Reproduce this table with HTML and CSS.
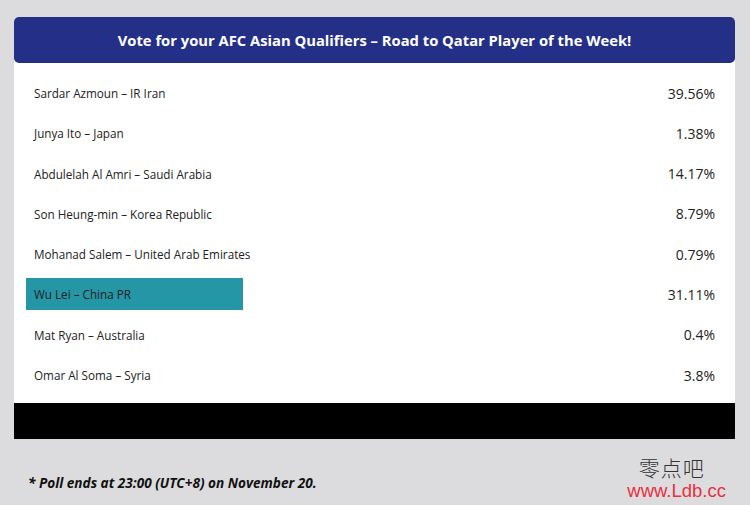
FILE: index.html
```html
<!DOCTYPE html>
<html>
<head>
<meta charset="utf-8">
<link rel="stylesheet" href="styles.css">
</head>
<body>
<div class="page">
  <div class="card">
    <div class="header">Vote for your AFC Asian Qualifiers – Road to Qatar Player of the Week!</div>
    <div class="results">
      <div class="row"><span class="name">Sardar Azmoun – IR Iran</span><span class="pct">39.56%</span></div>
      <div class="row"><span class="name">Junya Ito – Japan</span><span class="pct">1.38%</span></div>
      <div class="row"><span class="name">Abdulelah Al Amri – Saudi Arabia</span><span class="pct">14.17%</span></div>
      <div class="row"><span class="name">Son Heung-min – Korea Republic</span><span class="pct">8.79%</span></div>
      <div class="row"><span class="name">Mohanad Salem – United Arab Emirates</span><span class="pct">0.79%</span></div>
      <div class="row"><div class="bar" style="width:31.11%"></div><span class="name">Wu Lei – China PR</span><span class="pct">31.11%</span></div>
      <div class="row"><span class="name">Mat Ryan – Australia</span><span class="pct">0.4%</span></div>
      <div class="row"><span class="name">Omar Al Soma – Syria</span><span class="pct">3.8%</span></div>
    </div>
    <div class="footbar"></div>
  </div>
  <p class="note">* Poll ends at 23:00 (UTC+8) on November 20.</p>
  <div class="watermark">
    <div class="wm-cn">零点吧</div>
    <div class="wm-url">www.Ldb.cc</div>
  </div>
</div>
</body>
</html>
```
FILE: styles.css
```css
html, body {
  margin: 0;
  padding: 0;
  background: #dcdcde;
}
.page {
  position: relative;
  width: 750px;
  height: 505px;
  padding: 17px 15px 0 14px;
  box-sizing: border-box;
  font-family: "Open Sans", "Liberation Sans", sans-serif;
}
.card {
  background: #fff;
  border-radius: 5px 5px 0 0;
}
.header {
  height: 46px;
  background: #243087;
  border-radius: 5px;
  color: #fff;
  font-weight: 700;
  font-size: 14.75px;
  display: flex;
  align-items: center;
  justify-content: center;
}
.results {
  display: flex;
  flex-direction: column;
  gap: 8.3px;
  padding: 14px 12px 12px 12px;
}
.row {
  position: relative;
  height: 32px;
  display: flex;
  align-items: center;
  justify-content: space-between;
  padding: 0 8px;
  color: #222;
}
.bar {
  position: absolute;
  left: 0;
  top: 0;
  bottom: 0;
  background: #2596a6;
}
.name {
  position: relative;
  font-size: 11.7px;
}
.pct {
  position: relative;
  font-size: 14px;
}
.footbar {
  height: 36px;
  background: #000;
}
.note {
  margin: 34px 0 0 14px;
  font-size: 13.6px;
  font-weight: 700;
  font-style: italic;
  color: #111;
}
.watermark {
  position: absolute;
  right: 24px;
  top: 455px;
  display: flex;
  flex-direction: column;
  align-items: center;
}
.wm-cn {
  font-family: "Noto Sans CJK SC", sans-serif;
  font-weight: 300;
  font-size: 21px;
  line-height: 25px;
  color: #333;
  letter-spacing: 1px;
  margin-right: 10px;
}
.wm-url {
  font-family: "Liberation Sans", sans-serif;
  font-size: 18.5px;
  line-height: 21px;
  color: #e8303f;
}
```
